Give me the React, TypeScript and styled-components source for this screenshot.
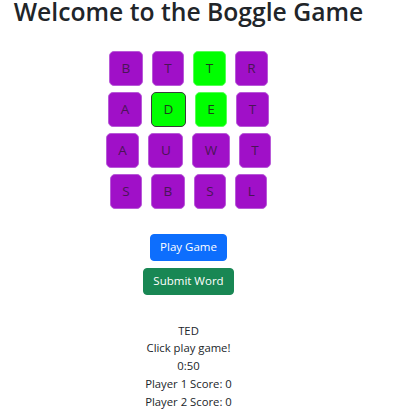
import React from "react";
import styled, { createGlobalStyle } from "styled-components";

const GlobalStyle = createGlobalStyle`
  html, body {
    margin: 0;
    padding: 0;
    background: #ffffff;
  }
  body {
    font-family: "Open Sans", "Noto Sans", "Liberation Sans", sans-serif;
    color: #212529;
    overflow: hidden;
  }
`;

const Page = styled.div`
  width: 377px;
  display: flex;
  flex-direction: column;
  align-items: center;
`;

const Title = styled.h1`
  margin: -3px 0 0;
  font-size: 24.7px;
  line-height: 1.2;
  font-weight: 600;
  color: #212529;
  white-space: nowrap;
`;

const Board = styled.div`
  margin-top: 24px;
  display: flex;
  flex-direction: column;
  gap: 6px;
`;

const Row = styled.div`
  display: flex;
  justify-content: center;
  gap: 9px;
`;

type TileKind = "plain" | "found" | "current";

const Tile = styled.div<{ $kind: TileKind }>`
  box-sizing: border-box;
  height: 35px;
  padding: 6px 11.5px;
  font-size: 13.5px;
  line-height: 21px;
  border-radius: 5px;
  border: 1px solid
    ${(p) =>
      p.$kind === "current"
        ? "#3a3a3a"
        : p.$kind === "found"
        ? "#55ff55"
        : "#b85ad8"};
  background: ${(p) => (p.$kind === "plain" ? "#a010c8" : "#00ff00")};
  color: ${(p) => (p.$kind === "plain" ? "#4a1556" : "#1d3b1d")};
  text-align: center;
`;

const Controls = styled.div`
  margin-top: 25px;
  display: flex;
  flex-direction: column;
  align-items: center;
  gap: 7px;
`;

const Button = styled.button<{ $variant: "primary" | "success" }>`
  box-sizing: border-box;
  height: 27px;
  padding: 0 9px;
  font-family: inherit;
  font-size: 11.5px;
  line-height: 18px;
  color: #ffffff;
  border-radius: 4px;
  border: 1px solid ${(p) => (p.$variant === "primary" ? "#0d6efd" : "#198754")};
  background: ${(p) => (p.$variant === "primary" ? "#0d6efd" : "#198754")};
  cursor: pointer;
`;

const Status = styled.div`
  margin-top: 27px;
  display: flex;
  flex-direction: column;
  align-items: center;
  font-size: 11.3px;
  line-height: 17.75px;
  color: #212529;
`;

const Line = styled.div``;

const grid: { l: string; k: TileKind }[][] = [
  [
    { l: "B", k: "plain" },
    { l: "T", k: "plain" },
    { l: "T", k: "found" },
    { l: "R", k: "plain" },
  ],
  [
    { l: "A", k: "plain" },
    { l: "D", k: "current" },
    { l: "E", k: "found" },
    { l: "T", k: "plain" },
  ],
  [
    { l: "A", k: "plain" },
    { l: "U", k: "plain" },
    { l: "W", k: "plain" },
    { l: "T", k: "plain" },
  ],
  [
    { l: "S", k: "plain" },
    { l: "B", k: "plain" },
    { l: "S", k: "plain" },
    { l: "L", k: "plain" },
  ],
];

export default function App() {
  return (
    <>
      <GlobalStyle />
      <Page>
        <Title>Welcome to the Boggle Game</Title>
        <Board>
          {grid.map((row, r) => (
            <Row key={r}>
              {row.map((t, c) => (
                <Tile key={c} $kind={t.k}>
                  {t.l}
                </Tile>
              ))}
            </Row>
          ))}
        </Board>
        <Controls>
          <Button $variant="primary">Play Game</Button>
          <Button $variant="success">Submit Word</Button>
        </Controls>
        <Status>
          <Line>TED</Line>
          <Line>Click play game!</Line>
          <Line>0:50</Line>
          <Line>Player 1 Score: 0</Line>
          <Line>Player 2 Score: 0</Line>
        </Status>
      </Page>
    </>
  );
}
